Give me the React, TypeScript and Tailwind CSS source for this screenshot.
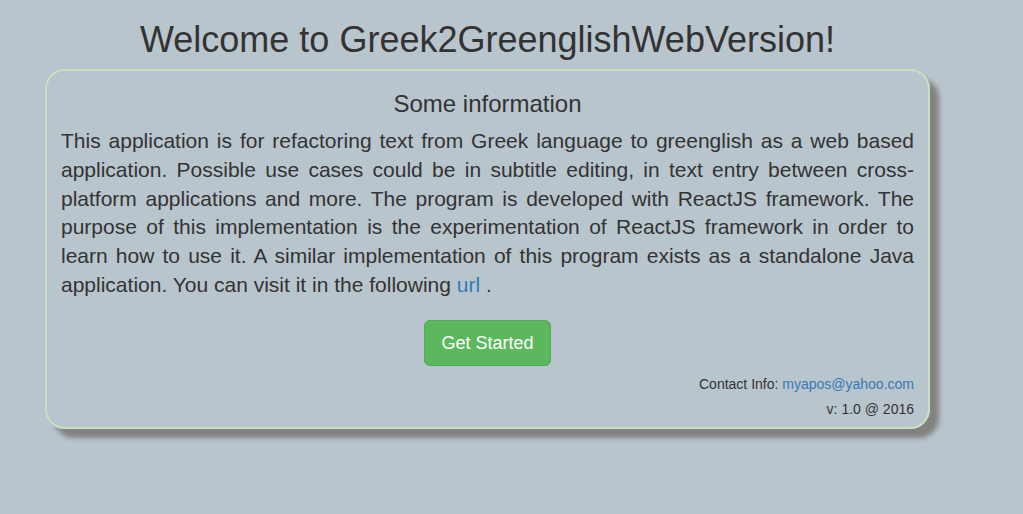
export default function App() {
    return (
        <div className="min-h-[514px] w-full bg-[#b9c5cc] text-[#333333] font-['Liberation_Sans',Arial,sans-serif]">
            <div className="ml-[45px] w-[885px] pt-[20px]">
                {/* Page title */}
                <h1 className="text-center text-[36px] leading-[39.6px] mb-[9px] font-normal">
                    Welcome to Greek2GreenglishWebVersion!
                </h1>

                {/* Info card */}
                <div className="rounded-[20px] border-2 border-[#c6e0c0] px-[14px] pb-[5px] shadow-[9px_9px_5px_#828282]">
                    <h3 className="mt-[20px] mb-[10px] text-center text-[24px] leading-[26.4px] font-normal">
                        Some information
                    </h3>
                    <p className="text-justify text-[21px] leading-[28.8px] mb-[20px]">
                        This application is for refactoring text from Greek language to greenglish as a web based application. Possible use cases could be in subtitle editing, in text entry between cross-platform applications and more. The program is developed with ReactJS framework. The purpose of this implementation is the experimentation of ReactJS framework in order to learn how to use it. A similar implementation of this program exists as a standalone Java application. You can visit it in the following{" "}
                        <a href="#" className="text-[#337ab7]">url</a> .
                    </p>

                    <div className="flex justify-center">
                        <button className="rounded-[6px] border border-[#4cae4c] bg-[#5cb85c] px-[16px] py-[10px] text-[18px] leading-[24px] text-white">
                            Get Started
                        </button>
                    </div>

                    <div className="mt-[6px] text-right text-[14px] leading-[25px]">
                        Contact Info: <a href="#" className="text-[#337ab7]">myapos@yahoo.com</a>
                    </div>
                    <div className="text-right text-[14px] leading-[25px]">v: 1.0 @ 2016</div>
                </div>
            </div>
        </div>
    )
}
